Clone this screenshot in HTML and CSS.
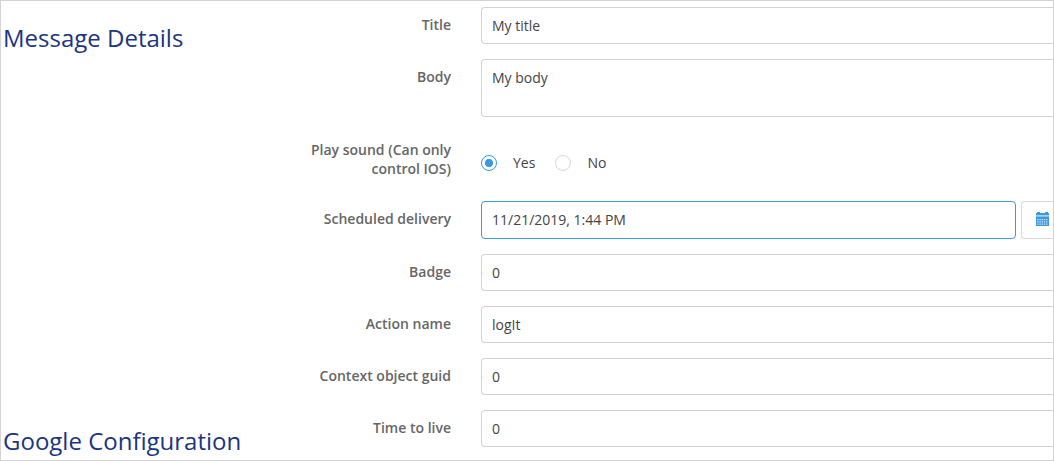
FILE: index.html
```html
<!DOCTYPE html>
<html lang="en">
<head>
<meta charset="utf-8">
<title>Message Details</title>
<link rel="stylesheet" href="styles.css">
</head>
<body>
<main class="panel">
  <div class="headings">
    <h2 class="heading">Message Details</h2>
    <h2 class="heading">Google Configuration</h2>
  </div>
  <form class="form">
    <div class="row"><div class="label">Title</div><div class="field">My title</div></div>
    <div class="row"><div class="label">Body</div><div class="field field-area">My body</div></div>
    <div class="row">
      <div class="label">Play sound (Can only control IOS)</div>
      <div class="radios">
        <span class="radio radio-on"></span><span class="radio-text">Yes</span>
        <span class="radio"></span><span class="radio-text">No</span>
      </div>
    </div>
    <div class="row">
      <div class="label">Scheduled delivery</div>
      <div class="date">
        <div class="field field-focus">11/21/2019, 1:44 PM</div>
        <div class="date-button">
          <svg class="calendar" width="13" height="14" viewBox="0 0 13 14">
            <path fill="#3b99e0" d="M0 1h1V0h3v1h5V0h3v1h1v2H0z"/>
            <path fill="#a5d0f0" d="M0 3h13v1.500H0z"/>
            <path fill="#3b99e0" d="M0 4.500h13V14H0z"/>
            <path stroke="#fff" stroke-opacity=".7" stroke-width="1.300" stroke-dasharray="1.400 .8" d="M1.200 7.600h10.600M1.200 9.900h10.600M1.200 12.200h10.600"/>
          </svg>
        </div>
      </div>
    </div>
    <div class="row"><div class="label">Badge</div><div class="field">0</div></div>
    <div class="row"><div class="label">Action name</div><div class="field">logIt</div></div>
    <div class="row"><div class="label">Context object guid</div><div class="field">0</div></div>
    <div class="row"><div class="label">Time to live</div><div class="field">0</div></div>
  </form>
</main>
</body>
</html>
```
FILE: styles.css
```css
* { box-sizing: border-box; }
body {
  margin: 0;
  background: #fff;
  font-family: "Open Sans", "Noto Sans", sans-serif;
  font-size: 14px;
  line-height: 19px;
  color: #444;
}
.panel {
  display: flex;
  width: 1054px;
  height: 461px;
  border: 1px solid #d3d3d3;
  overflow: hidden;
}
.headings {
  display: flex;
  flex-direction: column;
  justify-content: space-between;
  flex: 0 0 300px;
  padding: 20px 0 2px 2px;
}
.heading {
  margin: 0;
  font-size: 24px;
  line-height: 34px;
  font-weight: 400;
  color: #1b3580;
  white-space: nowrap;
}
.form {
  display: flex;
  flex-direction: column;
  flex: 1;
  gap: 15px;
  padding-top: 6px;
}
.row {
  display: grid;
  grid-template-columns: 150px 1fr;
  column-gap: 30px;
}
.label {
  padding: 8px 0;
  text-align: right;
  font-weight: 600;
  color: #666;
}
.field {
  height: 37px;
  padding: 8px 10px;
  border: 1px solid #d3d3d3;
  border-right: 0;
  border-radius: 4px 0 0 4px;
}
.field-area { height: 58px; }
.date { display: flex; gap: 5px; }
.field-focus {
  flex: 0 0 535px;
  height: 38px;
  border: 1px solid #3b99dc;
  border-radius: 4px;
}
.date-button {
  flex: 1;
  height: 38px;
  padding: 10px 0 0 14px;
  border: 1px solid #d9d9d9;
  border-right: 0;
  border-radius: 4px 0 0 4px;
}
.calendar { display: block; }
.radios {
  display: flex;
  align-items: center;
  height: 62px;
  margin-bottom: -8px;
}
.radio {
  width: 16px;
  height: 16px;
  border: 1px solid #d9d9d9;
  border-radius: 50%;
}
.radio-on {
  border-color: #3b99e0;
  background: radial-gradient(circle, #3b99e0 3.700px, #fff 4.500px);
}
.radio-text { margin: 0 20px 1px 16px; }
```
